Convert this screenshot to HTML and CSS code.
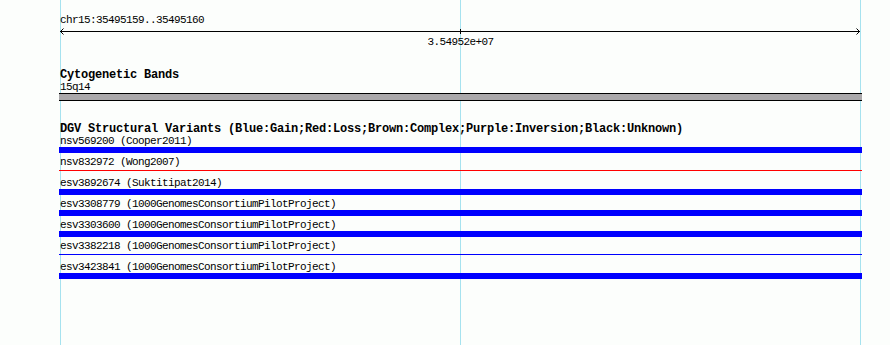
FILE: index.html
```html
<!DOCTYPE html>
<html lang="en">
<head>
  <meta charset="UTF-8">
  <title>DGV Structural Variants</title>
  <link rel="stylesheet" href="styles.css">
</head>
<body>
  <div class="panel">
    <div class="locus">chr15:35495159..35495160</div>

    <!-- Ruler -->
    <div class="ruler">
      <svg width="803" height="8" viewBox="0 0 803 8">
        <line x1="1" y1="4.5" x2="801" y2="4.5" stroke="#000" stroke-width="1"/>
        <path d="M4.5 1.5 L1.5 4.5 L4.5 7.5" fill="none" stroke="#000" stroke-width="1"/>
        <path d="M797.5 1.5 L800.5 4.5 L797.5 7.5" fill="none" stroke="#000" stroke-width="1"/>
        <line x1="401.5" y1="2" x2="401.5" y2="7" stroke="#000" stroke-width="1"/>
      </svg>
      <div class="ruler-label">3.54952e+07</div>
    </div>

    <!-- Cytogenetic bands -->
    <div class="track track-bands">
      <div class="track-title">Cytogenetic Bands</div>
      <div class="label">15q14</div>
      <div class="band"></div>
    </div>

    <!-- DGV -->
    <div class="track track-dgv">
      <div class="track-title">DGV Structural Variants (Blue:Gain;Red:Loss;Brown:Complex;Purple:Inversion;Black:Unknown)</div>

      <div class="feature">
        <div class="label">nsv569200 (Cooper2011)</div>
        <div class="bar gain"></div>
      </div>
      <div class="feature">
        <div class="label">nsv832972 (Wong2007)</div>
        <div class="bar thin loss"></div>
      </div>
      <div class="feature">
        <div class="label">esv3892674 (Suktitipat2014)</div>
        <div class="bar gain"></div>
      </div>
      <div class="feature">
        <div class="label">esv3308779 (1000GenomesConsortiumPilotProject)</div>
        <div class="bar gain"></div>
      </div>
      <div class="feature">
        <div class="label">esv3303600 (1000GenomesConsortiumPilotProject)</div>
        <div class="bar gain"></div>
      </div>
      <div class="feature">
        <div class="label">esv3382218 (1000GenomesConsortiumPilotProject)</div>
        <div class="bar thin gain"></div>
      </div>
      <div class="feature">
        <div class="label">esv3423841 (1000GenomesConsortiumPilotProject)</div>
        <div class="bar gain"></div>
      </div>
    </div>
  </div>
</body>
</html>
```

FILE: styles.css
```css
html {
  height: 100%;
}

body {
  margin: 0;
  min-height: 100%;
  font-family: "Liberation Mono", "DejaVu Sans Mono", monospace;
  color: #000;
  background-color: #fcfefc;
  /* grid lines behind the tracks */
  background-image: linear-gradient(90deg,
    transparent 60px, #a6e2ef 60px, #a6e2ef 61px,
    transparent 61px, transparent 460px, #a6e2ef 460px, #a6e2ef 461px,
    transparent 461px, transparent 860px, #a6e2ef 860px, #a6e2ef 861px,
    transparent 861px);
}

.panel {
  width: 803px;
  padding-left: 59px;
  padding-top: 14px;
}

.locus,
.label,
.ruler-label {
  font-size: 11px;
  letter-spacing: -0.6px;
  line-height: 13px;
  padding-left: 1px;
  white-space: nowrap;
}

.label {
  line-height: 11px;
}

.ruler svg {
  display: block;
}

.ruler-label {
  text-align: center;
  padding-left: 0;
  margin-top: 1px;
}

.track-title {
  font-size: 12px;
  font-weight: bold;
  letter-spacing: -0.2px;
  line-height: 13px;
  padding-left: 1px;
  white-space: nowrap;
}

.track-bands {
  margin-top: 20px;
}

.band {
  height: 6px;
  background-color: #aaa8aa;
  border-top: 1px solid #000;
  border-bottom: 1px solid #000;
}

.track-dgv {
  margin-top: 22px;
}

.feature {
  padding-bottom: 4px;
}

.bar {
  height: 6px;
}

.bar.gain {
  background-color: #0000ff;
}

.bar.loss {
  background-color: #ff0000;
}

/* thin features are drawn as a 1px line in the middle of the row */
.bar.thin {
  background-clip: content-box;
  box-sizing: border-box;
  padding-top: 2px;
  padding-bottom: 3px;
}
```
